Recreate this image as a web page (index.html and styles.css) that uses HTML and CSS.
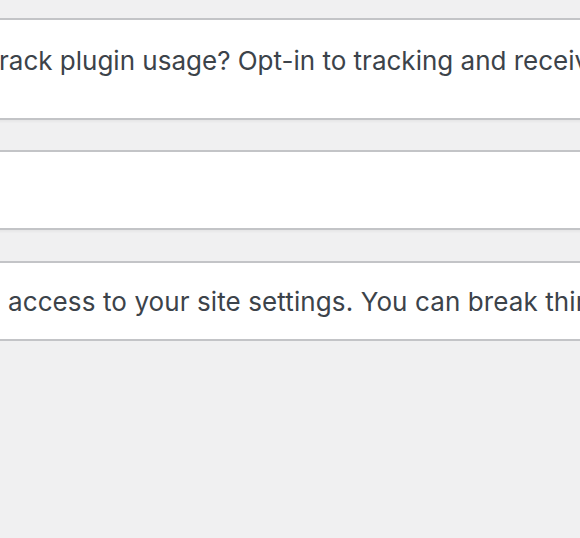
FILE: index.html
```html
<!DOCTYPE html>
<html lang="en">
<head>
<meta charset="utf-8">
<link rel="stylesheet" href="styles.css">
</head>
<body>
<div class="wrap">
  <div class="notice notice-tall">
    <p class="msg msg-first">rack plugin usage? Opt-in to tracking and receive</p>
  </div>
  <div class="notice notice-empty"></div>
  <div class="notice notice-last">
    <p class="msg msg-third">access to your site settings. You can break things</p>
  </div>
</div>
</body>
</html>
```
FILE: styles.css
```css
html, body {
  margin: 0;
  padding: 0;
  background: #f0f0f1;
  overflow: hidden;
}
.wrap {
  display: flex;
  flex-direction: column;
  gap: 30px;
  padding-top: 18px;
  margin-left: -20px;
  margin-right: -20px;
}
.notice {
  background: #fff;
  border: 2px solid #c3c4c7;
  box-shadow: 0 2px 2px rgba(0, 0, 0, 0.04);
  height: 76px;
  display: flex;
  align-items: center;
  overflow: hidden;
}
.notice-tall {
  height: 98px;
  align-items: flex-start;
}
.notice-empty {
  height: 76px;
}
.notice-last {
  margin-top: 1px;
}
.msg {
  margin: 0;
  white-space: nowrap;
  font-family: Inter, "Liberation Sans", sans-serif;
  font-size: 26px;
  line-height: 39px;
  color: #3c434a;
}
.msg-first {
  margin-top: 21px;
  margin-left: 17px;
}
.msg-third {
  margin-left: 26px;
  letter-spacing: 0.1px;
}
```
